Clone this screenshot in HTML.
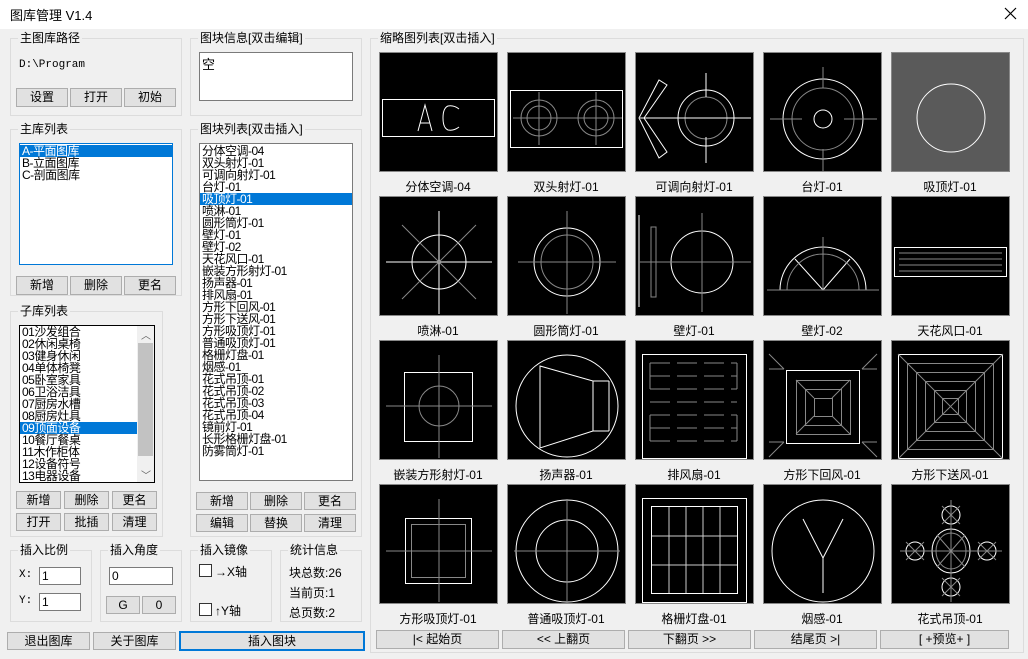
<!DOCTYPE html>
<html><head><meta charset="utf-8">
<style>
*{box-sizing:border-box;margin:0;padding:0}
body{width:1028px;height:659px;background:#f0f0f0;position:relative;overflow:hidden;font-family:"Liberation Sans","Noto Sans CJK SC",sans-serif;font-size:12px;color:#000}
.a{position:absolute}
.title{position:absolute;left:0;top:0;width:1028px;height:29px;background:#fff}
.g{position:absolute;border:1px solid #dcdcdc}
.g>.t{position:absolute;left:7px;top:-9px;background:#f0f0f0;padding:0 2px;font-size:12px;line-height:16px}
.b{position:absolute;background:#e1e1e1;border:1px solid #adadad;text-align:center;font-size:12px;line-height:17px}
.box{position:absolute;background:#fff;border:1px solid #7a7a7a}
.list div{height:12px;line-height:12px;font-size:12px;padding-left:2px;white-space:nowrap;letter-spacing:-0.5px}
.sel{background:#0078d7;color:#fff}
.th{position:absolute;width:119px;height:120px;background:#000;border:1px solid #888}
.th svg{display:block}
.lb{position:absolute;width:128px;text-align:center;font-size:12px}
.n{position:absolute;top:630px;height:19px;background:#e1e1e1;border:1px solid #adadad;text-align:center;line-height:17px;font-size:12px}
</style></head><body>
<div class="title"></div>
<div class="a" style="left:10px;top:5px;font-size:13px">图库管理 V1.4</div>
<svg class="a" style="left:1004px;top:7px" width="13" height="13"><path d="M1 1L12 12M12 1L1 12" stroke="#000" stroke-width="1.2"/></svg>

<!-- 主图库路径 -->
<div class="g" style="left:10px;top:38px;width:172px;height:78px"><span class="t">主图库路径</span></div>
<div class="a" style="left:19px;top:59px;font-family:'Liberation Mono',monospace;font-size:11px">D:\Program</div>
<div class="b" style="left:16px;top:88px;width:52px;height:19px">设置</div>
<div class="b" style="left:70px;top:88px;width:52px;height:19px">打开</div>
<div class="b" style="left:124px;top:88px;width:52px;height:19px">初始</div>

<!-- 主库列表 -->
<div class="g" style="left:10px;top:129px;width:172px;height:167px"><span class="t">主库列表</span></div>
<div class="box list" style="left:19px;top:143px;width:154px;height:122px;border-color:#0078d7;padding-top:1px">
<div class="sel">A-平面图库</div><div>B-立面图库</div><div>C-剖面图库</div></div>
<div class="b" style="left:16px;top:276px;width:52px;height:19px">新增</div>
<div class="b" style="left:70px;top:276px;width:52px;height:19px">删除</div>
<div class="b" style="left:124px;top:276px;width:52px;height:19px">更名</div>

<!-- 子库列表 -->
<div class="g" style="left:10px;top:311px;width:153px;height:226px"><span class="t">子库列表</span></div>
<div class="box list" style="left:19px;top:325px;width:136px;height:158px;border-color:#000;padding-top:0px;overflow:hidden">
<div>01沙发组合</div><div>02休闲桌椅</div><div>03健身休闲</div><div>04单体椅凳</div><div>05卧室家具</div><div>06卫浴洁具</div><div>07厨房水槽</div><div>08厨房灶具</div><div class="sel" style="width:117px">09顶面设备</div><div>10餐厅餐桌</div><div>11木作柜体</div><div>12设备符号</div><div>13电器设备</div></div>
<div class="a" style="left:137px;top:326px;width:17px;height:156px;background:#f0f0f0"></div>
<div class="a" style="left:138px;top:343px;width:15px;height:113px;background:#c2c2c2"></div>
<div class="a" style="left:141px;top:327px;font-size:10px;color:#606060">︿</div>
<div class="a" style="left:141px;top:467px;font-size:10px;color:#606060">﹀</div>
<div class="b" style="left:16px;top:491px;width:45px;height:18px">新增</div>
<div class="b" style="left:64px;top:491px;width:45px;height:18px">删除</div>
<div class="b" style="left:112px;top:491px;width:45px;height:18px">更名</div>
<div class="b" style="left:16px;top:513px;width:45px;height:18px">打开</div>
<div class="b" style="left:64px;top:513px;width:45px;height:18px">批插</div>
<div class="b" style="left:112px;top:513px;width:45px;height:18px">清理</div>

<!-- 图块信息 -->
<div class="g" style="left:190px;top:38px;width:172px;height:78px"><span class="t">图块信息[双击编辑]</span></div>
<div class="box" style="left:199px;top:52px;width:154px;height:49px;padding:1px 2px;font-size:13px">空</div>

<!-- 图块列表 -->
<div class="g" style="left:190px;top:129px;width:172px;height:408px"><span class="t">图块列表[双击插入]</span></div>
<div class="box list" style="left:199px;top:143px;width:154px;height:338px;padding-top:1px">
<div>分体空调-04</div><div>双头射灯-01</div><div>可调向射灯-01</div><div>台灯-01</div><div class="sel">吸顶灯-01</div><div>喷淋-01</div><div>圆形筒灯-01</div><div>壁灯-01</div><div>壁灯-02</div><div>天花风口-01</div><div>嵌装方形射灯-01</div><div>扬声器-01</div><div>排风扇-01</div><div>方形下回风-01</div><div>方形下送风-01</div><div>方形吸顶灯-01</div><div>普通吸顶灯-01</div><div>格栅灯盘-01</div><div>烟感-01</div><div>花式吊顶-01</div><div>花式吊顶-02</div><div>花式吊顶-03</div><div>花式吊顶-04</div><div>镜前灯-01</div><div>长形格栅灯盘-01</div><div>防雾筒灯-01</div></div>
<div class="b" style="left:196px;top:492px;width:52px;height:18px">新增</div>
<div class="b" style="left:250px;top:492px;width:52px;height:18px">删除</div>
<div class="b" style="left:304px;top:492px;width:52px;height:18px">更名</div>
<div class="b" style="left:196px;top:514px;width:52px;height:18px">编辑</div>
<div class="b" style="left:250px;top:514px;width:52px;height:18px">替换</div>
<div class="b" style="left:304px;top:514px;width:52px;height:18px">清理</div>

<!-- bottom groups -->
<div class="g" style="left:10px;top:550px;width:82px;height:72px"><span class="t">插入比例</span></div>
<div class="a" style="left:19px;top:569px;font-family:'Liberation Mono',monospace;font-size:11px">X:</div>
<div class="box" style="left:39px;top:567px;width:42px;height:18px;padding-left:2px;line-height:16px">1</div>
<div class="a" style="left:19px;top:595px;font-family:'Liberation Mono',monospace;font-size:11px">Y:</div>
<div class="box" style="left:39px;top:593px;width:42px;height:18px;padding-left:2px;line-height:16px">1</div>
<div class="g" style="left:100px;top:550px;width:82px;height:72px"><span class="t">插入角度</span></div>
<div class="box" style="left:109px;top:567px;width:64px;height:18px;padding-left:2px;line-height:16px">0</div>
<div class="b" style="left:106px;top:596px;width:34px;height:18px">G</div>
<div class="b" style="left:142px;top:596px;width:34px;height:18px">0</div>
<div class="g" style="left:190px;top:550px;width:82px;height:72px"><span class="t">插入镜像</span></div>
<div class="box" style="left:199px;top:564px;width:13px;height:13px;border-color:#333"></div>
<div class="a" style="left:215px;top:563px">→X轴</div>
<div class="box" style="left:199px;top:603px;width:13px;height:13px;border-color:#333"></div>
<div class="a" style="left:215px;top:602px">↑Y轴</div>
<div class="g" style="left:280px;top:550px;width:82px;height:72px"><span class="t">统计信息</span></div>
<div class="a" style="left:289px;top:564px">块总数:26</div>
<div class="a" style="left:289px;top:584px">当前页:1</div>
<div class="a" style="left:289px;top:604px">总页数:2</div>

<div class="b" style="left:7px;top:632px;width:83px;height:18px">退出图库</div>
<div class="b" style="left:93px;top:632px;width:83px;height:18px">关于图库</div>
<div class="b" style="left:179px;top:631px;width:186px;height:20px;border:2px solid #0078d7;line-height:16px">插入图块</div>

<!-- thumbnails -->
<div class="g" style="left:370px;top:38px;width:654px;height:615px"><span class="t">缩略图列表[双击插入]</span></div>

<div class="th" style="left:379px;top:52px"><svg width="117" height="118" fill="none" stroke="#fff"><rect x="2.5" y="46.5" width="112" height="37"/><path d="M38 78L45 52L52 78M40.5 70H49.5M79 56Q74 52 68 53Q63 55 63 65Q63 75 68 77Q74 78 79 74"/></svg></div>
<div class="th" style="left:507px;top:52px"><svg width="117" height="118" fill="none" stroke="#fff"><rect x="2.5" y="37.5" width="112" height="57"/><g stroke="#888"><circle cx="31" cy="65" r="18"/><circle cx="31" cy="65" r="12"/><circle cx="88" cy="65" r="18"/><circle cx="88" cy="65" r="12"/><path d="M5 65H60M31 39V92M60 65H114M88 39V92"/></g></svg></div>
<div class="th" style="left:635px;top:52px"><svg width="117" height="118" fill="none" stroke="#fff"><circle cx="70" cy="65" r="28"/><circle cx="70" cy="65" r="21" stroke="#888"/><path d="M4 65H115M70 20V44M70 84V110"/><path d="M3 65L23 27L31 32L8 65L31 99L23 105Z"/></svg></div>
<div class="th" style="left:763px;top:52px"><svg width="117" height="118" fill="none" stroke="#fff"><circle cx="59" cy="66" r="40"/><circle cx="59" cy="66" r="9"/><g stroke="#888"><circle cx="59" cy="66" r="31"/><path d="M6 66H38M80 66H113M59 14V35M59 96V118"/></g></svg></div>
<div class="th" style="left:891px;top:52px;background:#5a5a5a"><svg width="117" height="118" fill="none" stroke="#fff"><ellipse cx="59" cy="65" rx="34" ry="34"/></svg></div>

<div class="th" style="left:379px;top:196px"><svg width="117" height="118" fill="none" stroke="#fff"><circle cx="59" cy="65" r="27"/><path d="M6 65H112M59 14V117"/><path stroke="#888" d="M22 28L96 102M96 28L22 102"/></svg></div>
<div class="th" style="left:507px;top:196px"><svg width="117" height="118" fill="none" stroke="#fff"><ellipse cx="59" cy="65" rx="33" ry="34"/><g stroke="#888"><ellipse cx="59" cy="65" rx="26" ry="27"/><path d="M10 65H108M59 14V117"/></g></svg></div>
<div class="th" style="left:635px;top:196px"><svg width="117" height="118" fill="none" stroke="#fff"><path d="M3 18V110"/><rect x="15" y="30" width="5" height="70" stroke="#888"/><ellipse cx="66" cy="65" rx="31" ry="31"/><path stroke="#888" d="M3 65H115M66 16V115"/></svg></div>
<div class="th" style="left:763px;top:196px"><svg width="117" height="118" fill="none" stroke="#fff"><path d="M16 93A43 43 0 0 1 102 93"/><path d="M31 62L59 93L86 62"/><g stroke="#888"><path d="M23 93A36 36 0 0 1 95 93M3 93H115M59 40V93"/></g></svg></div>
<div class="th" style="left:891px;top:196px"><svg width="117" height="118" fill="none" stroke="#fff"><rect x="2.5" y="50.5" width="112" height="29"/><path stroke="#888" d="M7 56H110M7 62H110M7 68H110M7 74H110"/></svg></div>

<div class="th" style="left:379px;top:340px"><svg width="117" height="118" fill="none" stroke="#fff"><rect x="24.5" y="31.5" width="68" height="69"/><g stroke="#888"><circle cx="59" cy="65" r="20"/><path d="M6 65H112M59 14V117"/></g></svg></div>
<div class="th" style="left:507px;top:340px"><svg width="117" height="118" fill="none" stroke="#fff"><ellipse cx="59" cy="65" rx="51" ry="51"/><path d="M32 25L85 40V90L32 107Z M85 40H101M85 90H101M101 40V90"/></svg></div>
<div class="th" style="left:635px;top:340px"><svg width="117" height="118" fill="none" stroke="#fff"><rect x="6.5" y="13.5" width="104" height="104"/><path stroke="#888" d="M14 22H101M14 35H101M14 48H101M14 61H101M14 74H101M14 87H101M14 100H101" stroke-dasharray="20 7"/><path stroke="#888" d="M14 22V48M101 22V48M14 74V100M101 74V100"/></svg></div>
<div class="th" style="left:763px;top:340px"><svg width="117" height="118" fill="none" stroke="#fff"><rect x="22.5" y="29.5" width="73" height="73"/><g stroke="#888"><rect x="32.5" y="39.5" width="54" height="54"/><rect x="41.5" y="48.5" width="36" height="36"/><rect x="50.5" y="57.5" width="18" height="18"/><path d="M32 39L50 57M86 39L68 57M32 93L50 75M86 93L68 75M5 13L20 28M113 13L98 28M5 116L20 101M113 116L98 101M5 28H20M98 28H113M5 101H20M98 101H113"/></g></svg></div>
<div class="th" style="left:891px;top:340px"><svg width="117" height="118" fill="none" stroke="#fff"><rect x="6.5" y="13.5" width="104" height="104"/><g stroke="#888"><rect x="15.5" y="22.5" width="86" height="86"/><rect x="24.5" y="31.5" width="68" height="68"/><rect x="33.5" y="40.5" width="50" height="50"/><rect x="42.5" y="49.5" width="32" height="32"/><rect x="50.5" y="57.5" width="16" height="16"/><path d="M6 13L111 118M111 13L6 118"/></g></svg></div>

<div class="th" style="left:379px;top:484px"><svg width="117" height="118" fill="none" stroke="#fff"><rect x="25.5" y="33.5" width="66" height="65"/><g stroke="#888"><rect x="31.5" y="39.5" width="54" height="53"/><path d="M6 66H112M59 14V117"/></g></svg></div>
<div class="th" style="left:507px;top:484px"><svg width="117" height="118" fill="none" stroke="#fff"><ellipse cx="59" cy="66" rx="51" ry="51"/><ellipse cx="59" cy="66" rx="31" ry="31"/><path stroke="#888" d="M6 66H112M59 14V117"/></svg></div>
<div class="th" style="left:635px;top:484px"><svg width="117" height="118" fill="none" stroke="#fff"><rect x="6.5" y="13.5" width="104" height="104"/><rect x="15.5" y="21.5" width="86" height="87"/><path d="M16 51H101M16 80H101M33 22V108M50 22V108M67 22V108M84 22V108" stroke="#ccc"/></svg></div>
<div class="th" style="left:763px;top:484px"><svg width="117" height="118" fill="none" stroke="#fff"><ellipse cx="59" cy="66" rx="51" ry="51"/><path d="M39 34L59 73L79 34M59 73V108"/></svg></div>
<div class="th" style="left:891px;top:484px"><svg width="117" height="118" fill="none" stroke="#fff"><ellipse cx="59" cy="66" rx="19" ry="22"/><ellipse cx="59" cy="66" rx="15" ry="18" stroke="#888"/><circle cx="59" cy="30" r="9"/><circle cx="59" cy="102" r="9"/><circle cx="23" cy="66" r="9"/><circle cx="95" cy="66" r="9"/><g stroke="#888"><path d="M59 15V117M8 66H110M45 50L73 82M73 50L45 82M50 21L68 39M68 21L50 39M50 93L68 111M68 93L50 111M14 57L32 75M32 57L14 75M86 57L104 75M104 57L86 75"/></g></svg></div>

<div class="lb" style="left:374px;top:178px">分体空调-04</div>
<div class="lb" style="left:502px;top:178px">双头射灯-01</div>
<div class="lb" style="left:630px;top:178px">可调向射灯-01</div>
<div class="lb" style="left:758px;top:178px">台灯-01</div>
<div class="lb" style="left:886px;top:178px">吸顶灯-01</div>
<div class="lb" style="left:374px;top:322px">喷淋-01</div>
<div class="lb" style="left:502px;top:322px">圆形筒灯-01</div>
<div class="lb" style="left:630px;top:322px">壁灯-01</div>
<div class="lb" style="left:758px;top:322px">壁灯-02</div>
<div class="lb" style="left:886px;top:322px">天花风口-01</div>
<div class="lb" style="left:374px;top:466px">嵌装方形射灯-01</div>
<div class="lb" style="left:502px;top:466px">扬声器-01</div>
<div class="lb" style="left:630px;top:466px">排风扇-01</div>
<div class="lb" style="left:758px;top:466px">方形下回风-01</div>
<div class="lb" style="left:886px;top:466px">方形下送风-01</div>
<div class="lb" style="left:374px;top:610px">方形吸顶灯-01</div>
<div class="lb" style="left:502px;top:610px">普通吸顶灯-01</div>
<div class="lb" style="left:630px;top:610px">格栅灯盘-01</div>
<div class="lb" style="left:758px;top:610px">烟感-01</div>
<div class="lb" style="left:886px;top:610px">花式吊顶-01</div>

<div class="n" style="left:376px;width:123px">|&lt; 起始页</div>
<div class="n" style="left:502px;width:123px">&lt;&lt; 上翻页</div>
<div class="n" style="left:628px;width:123px">下翻页 &gt;&gt;</div>
<div class="n" style="left:754px;width:123px">结尾页 &gt;|</div>
<div class="n" style="left:880px;width:129px">[ +预览+ ]</div>
</body></html>
